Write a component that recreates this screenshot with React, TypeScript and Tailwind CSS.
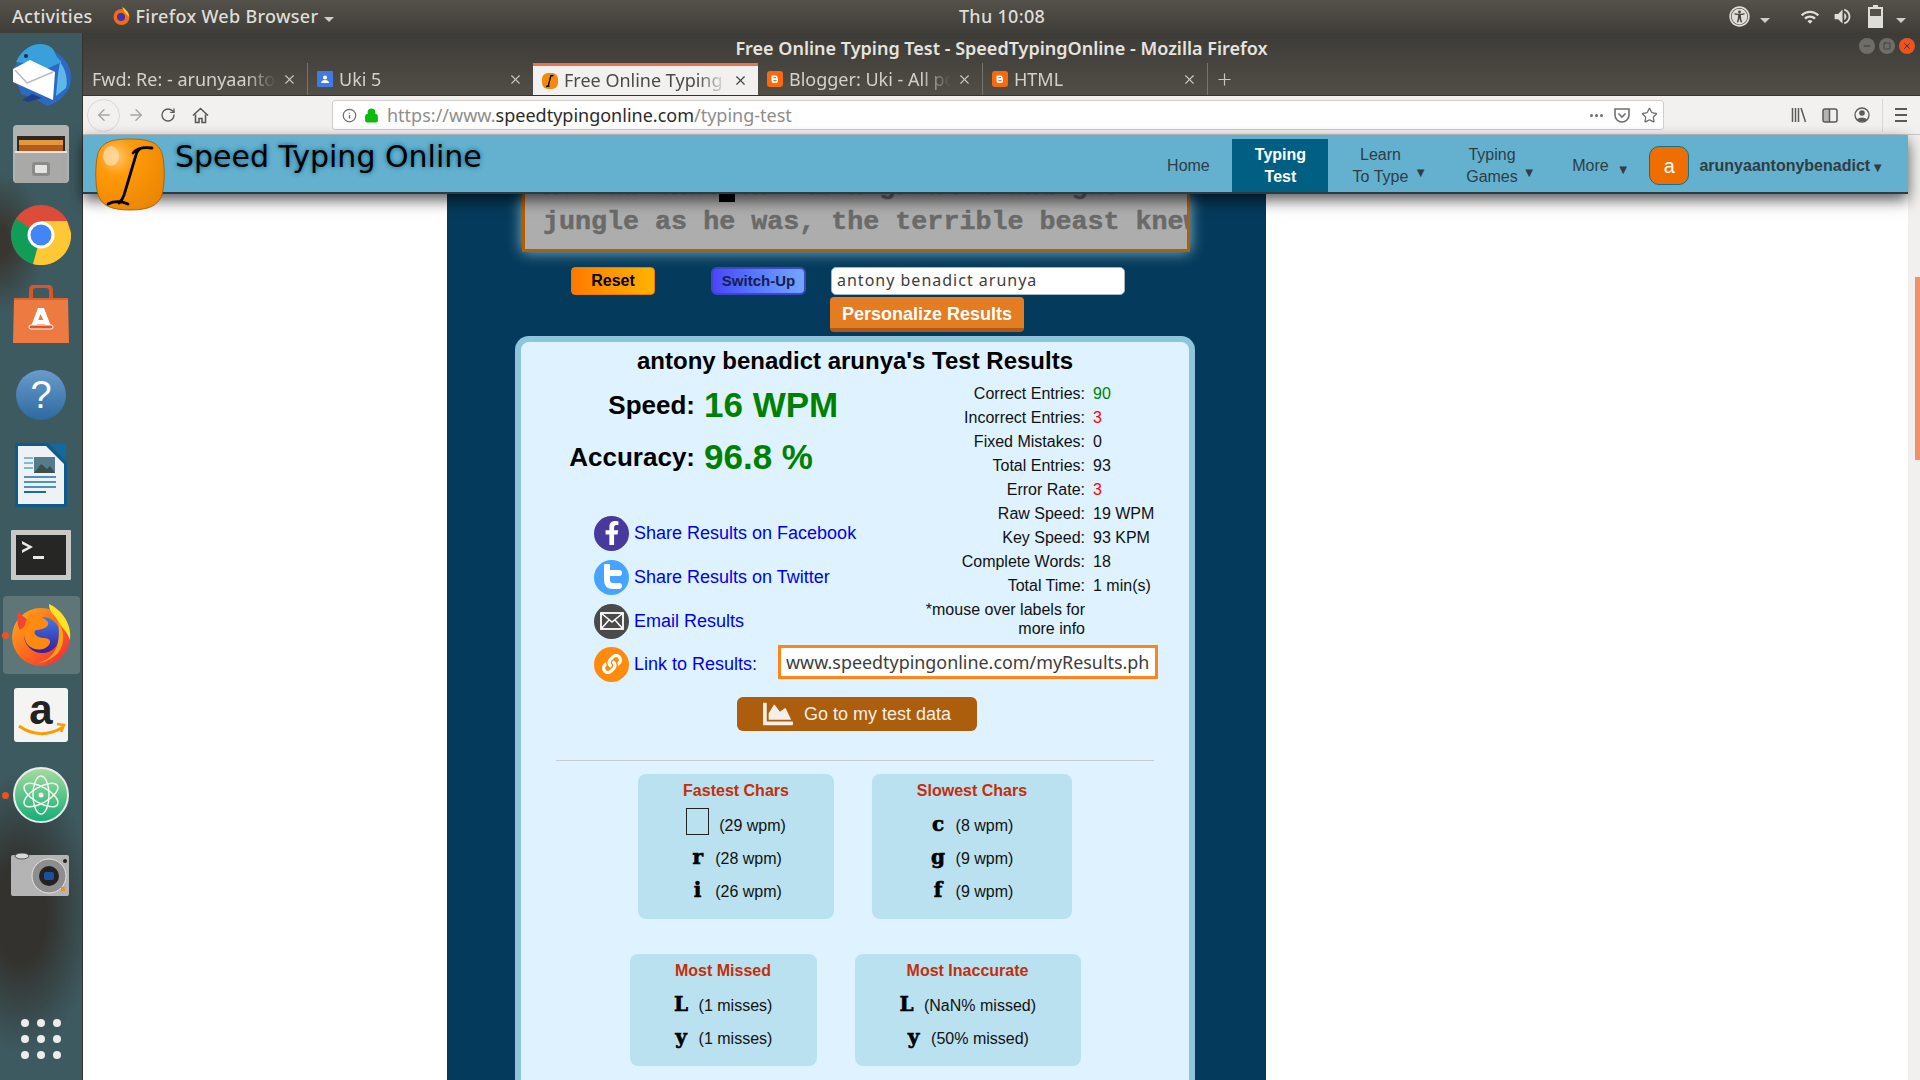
import React from "react";
import { ArrowLeft, ArrowRight, RotateCw, Info, Lock, Star, X, Plus, Minus, Square } from "lucide-react";
import { FaUniversalAccess, FaChartArea, FaFacebookF, FaLink } from "react-icons/fa";
import { MdWifi, MdVolumeUp } from "react-icons/md";

const ui = "font-['Noto_Sans',sans-serif]";
const arial = "font-['Liberation_Sans',Arial,sans-serif]";
const mono = "font-['Liberation_Mono','Courier_New',monospace]";

const TinyCaret = () => <span className="inline-block w-0 h-0 border-x-[5px] border-x-transparent border-t-[5px] border-t-[#cfcdc8]" />;

const BloggerIcon = () => (
  <svg width="16" height="16" viewBox="0 0 16 16" className="shrink-0">
    <rect width="16" height="16" rx="3" fill="#f96a0e" />
    <path d="M5 4.500h3.500a2 2 0 0 1 2 2v1h.5v2.500a2 2 0 0 1-2 2H6.500a2 2 0 0 1-2-2V5z" fill="#fff" />
    <rect x="6.500" y="6" width="2.500" height="1.200" fill="#f96a0e" />
    <rect x="6.500" y="9" width="3" height="1.200" fill="#f96a0e" />
  </svg>
);

const LogoFavicon = () => (
  <svg width="16" height="16" viewBox="0 0 16 16" className="shrink-0">
    <rect width="16" height="16" rx="6" fill="#f28a0c" />
    <path d="M10.500 2.500c-1 0-1.500.5-2 1.500L6.500 12c-.3 1-1 1.300-2 1.500M8 3l3.500-.5M4 13.500l3.500-.5" stroke="#000" strokeWidth="1.300" fill="none" />
  </svg>
);

const DocsIcon = () => (
  <svg width="16" height="16" viewBox="0 0 16 16" className="shrink-0">
    <rect width="16" height="16" rx="1" fill="#3f7be0" />
    <circle cx="8" cy="6.500" r="2" fill="#fff" />
    <path d="M4 12c0-2 2-3 4-3s4 1 4 3z" fill="#fff" />
  </svg>
);

type TabProps = { title: React.ReactNode; icon?: React.ReactNode; active?: boolean; sep?: boolean };

const Tab: React.FC<TabProps> = ({ title, icon, active, sep }) => (
  <div
    className={`relative w-[225px] h-full flex items-center gap-[6px] pl-[9px] pr-[10px] ${
      active ? "bg-[#f2f1ef] border-t-[3px] border-[#e9734a] text-[#4a4a47]" : "text-[#d3d1cb]"
    } ${sep ? "border-r border-[#77746c]" : ""}`}
  >
    {icon}
    <span className="flex-1 overflow-hidden whitespace-nowrap text-[18px] [mask-image:linear-gradient(to_left,transparent,black_30px)]">{title}</span>
    <X className={active ? "text-[#3f3f3c]" : "text-[#c9c7c1]"} size={15} strokeWidth={1.800} />
  </div>
);

const DockItem: React.FC<{ children: React.ReactNode; active?: boolean; dot?: boolean }> = ({ children, active, dot }) => (
  <div className="relative h-[80px] w-[83px] flex items-center justify-center">
    {active && <div className="absolute inset-x-[3px] inset-y-[1px] rounded-[4px] bg-[#5f7679]" />}
    {dot && <div className="absolute left-[2px] top-[37px] w-[7px] h-[7px] rounded-full bg-[#e95420]" />}
    <div className="relative">{children}</div>
  </div>
);

const Dock = () => (
  <div className="w-[83px] shrink-0 flex flex-col items-center pt-[2px] bg-[#3d5a60] bg-[radial-gradient(ellipse_75px_140px_at_25%_84%,#33322e_35%,transparent_100%),radial-gradient(ellipse_45px_70px_at_0%_20%,#38362f_20%,transparent_100%)] border-r border-[#33322e]">
    <DockItem>
      <svg width="66" height="66" viewBox="0 0 66 66">
        <path d="M30 8c12-4 30 6 33 24 2 16-10 28-24 32l-10-6-16-6L5 30C6 20 18 10 30 8z" fill="#2c68c4" />
        <path d="M8 20C16 2 34-2 44 6c4 4 2 8 10 14l-18 8-14-6z" fill="#3aa0dc" />
        <path d="M52 20c6 8 8 18 6 26l-10 8 2-22z" fill="#5cb8e8" />
        <path d="M5 27l17-9 25 12-2 28L5 40z" fill="#fff" />
        <path d="M7 28l12 13 26-11" fill="none" stroke="#b8bcc4" strokeWidth="1.500" />
        <path d="M14 58l10-6 10 4-14 4z" fill="#1e3f8a" />
        <circle cx="18" cy="14" r="2" fill="#15304f" />
      </svg>
    </DockItem>
    <DockItem>
      <svg width="58" height="60" viewBox="0 0 58 60">
        <rect x="1" y="0" width="56" height="58" rx="4" fill="#b2b2b0" />
        <rect x="5" y="11" width="48" height="20" fill="#2c2825" />
        <rect x="7" y="15" width="44" height="6" fill="#e59a3a" />
        <rect x="7" y="20" width="44" height="7" fill="#b75b1c" />
        <rect x="3" y="26" width="52" height="32" rx="1" fill="#a9a9a7" />
        <rect x="3" y="26" width="52" height="2" fill="#e5e5e3" />
        <rect x="20" y="37" width="18" height="14" rx="3" fill="#8b8b89" />
        <rect x="23" y="40" width="12" height="8" rx="1" fill="#e4e4e2" />
      </svg>
    </DockItem>
    <DockItem>
      <svg width="60" height="60" viewBox="0 0 60 60">
        <circle cx="30" cy="30" r="30" fill="#dd4b39" />
        <path d="M30 30L5 14A30 30 0 0 0 22 59z" fill="#0f9d58" />
        <path d="M30 30L22 59A30 30 0 0 0 60 28L56 16H30z" fill="#fcc934" />
        <circle cx="30" cy="30" r="13.500" fill="#fff" />
        <circle cx="30" cy="30" r="10.500" fill="#4285f4" />
      </svg>
    </DockItem>
    <DockItem>
      <svg width="58" height="60" viewBox="0 0 58 60">
        <path d="M19 14V6q0-5 5-5h10q5 0 5 5v8" fill="none" stroke="#d8572a" strokeWidth="4" />
        <path d="M2 13h54l1 45H1z" fill="#ed7a40" />
        <path d="M2 13h54v2H2z" fill="#d9642e" />
        <path d="M26 23h6l8 21h-5l-2-5H25l-2 5h-5z M28.500 29l-2.200 6h5z" fill="#fff" fillRule="evenodd" />
        <rect x="17" y="40" width="24" height="4" rx="2" fill="#e2552a" stroke="#fff" strokeWidth="1" />
      </svg>
    </DockItem>
    <DockItem>
      <svg width="52" height="52" viewBox="0 0 52 52">
        <defs>
          <linearGradient id="helpBg" x1="0" y1="0" x2="0" y2="1">
            <stop offset="0" stopColor="#6b9bcc" />
            <stop offset="1" stopColor="#2c6aa0" />
          </linearGradient>
        </defs>
        <circle cx="26" cy="26" r="25" fill="url(#helpBg)" />
        <text x="26" y="39" textAnchor="middle" fontSize="38" fontWeight="400" fill="#fff" fontFamily="Liberation Sans, sans-serif">?</text>
      </svg>
    </DockItem>
    <DockItem>
      <svg width="54" height="64" viewBox="0 0 54 64">
        <path d="M1 0h33l19 20v44H1z" fill="#0f5b8c" />
        <path d="M4 3h28l18 18v40H4z" fill="#eef2f4" />
        <path d="M37 1h15v17z" fill="#0f6aa4" />
        <rect x="20" y="14" width="21" height="16" fill="#567b8c" />
        <path d="M20 30l7-9 6 5 3-3 5 7z" fill="#3d4f4a" />
        <rect x="10" y="14" width="9" height="2" fill="#82b6d6" />
        <rect x="10" y="19" width="9" height="2" fill="#82b6d6" />
        <rect x="10" y="24" width="9" height="2" fill="#82b6d6" />
        <rect x="10" y="33" width="32" height="2" fill="#4c93c2" />
        <rect x="10" y="38" width="32" height="2" fill="#4c93c2" />
        <rect x="10" y="43" width="32" height="2" fill="#4c93c2" />
        <rect x="10" y="48" width="22" height="2" fill="#1d6a9c" />
      </svg>
    </DockItem>
    <DockItem>
      <svg width="60" height="50" viewBox="0 0 60 50">
        <rect x="0" y="0" width="60" height="50" rx="1" fill="#c8c8c6" />
        <rect x="5" y="5" width="50" height="40" fill="#262624" />
        <path d="M11 11l11 6-11 6v-3l6-3-6-3z" fill="#e8e8e6" />
        <rect x="22" y="26" width="11" height="3" fill="#e8e8e6" />
      </svg>
    </DockItem>
    <DockItem active dot>
      <svg width="62" height="62" viewBox="0 0 62 62">
        <defs>
          <linearGradient id="foxBg" x1="0" y1="0" x2="1" y2="1">
            <stop offset="0" stopColor="#ffb11f" />
            <stop offset="0.500" stopColor="#ff6a1a" />
            <stop offset="1" stopColor="#e6264a" />
          </linearGradient>
          <linearGradient id="foxCore" x1="0" y1="0" x2="0" y2="1">
            <stop offset="0" stopColor="#3f7be8" />
            <stop offset="1" stopColor="#3a1c9c" />
          </linearGradient>
        </defs>
        <circle cx="31" cy="33" r="29" fill="url(#foxBg)" />
        <path d="M8 8c-2 8 0 14 2 18l10-8z" fill="#f2462f" />
        <circle cx="32" cy="31" r="18" fill="url(#foxCore)" />
        <path d="M20 10c6 0 12 2 18 8 2 6-8 8-12 8-4 2 0 8 8 8 6 0 8 4 4 8-6 6-18 4-22-4-4-8-2-20 4-28z" fill="#ff8a12" />
        <path d="M39 0c13 6 23 20 21 36-3-9-8-12-12-19-3-6-9-8-9-17z" fill="#ffe226" />
        <path d="M48 17c6 8 8 22 0 32-6 6-14 10-20 10 14-4 24-14 20-42z" fill="#ff9f12" />
      </svg>
    </DockItem>
    <DockItem>
      <svg width="54" height="54" viewBox="0 0 54 54">
        <rect width="54" height="54" rx="3" fill="#f4f4f3" />
        <text x="27" y="36" textAnchor="middle" fontSize="42" fontWeight="700" fill="#222" fontFamily="Liberation Sans, sans-serif">a</text>
        <path d="M5 38c14 10 30 10 44 1" fill="none" stroke="#ff9a00" strokeWidth="3" />
        <path d="M43 36l7 1-3 7" fill="none" stroke="#ff9a00" strokeWidth="2.500" />
      </svg>
    </DockItem>
    <DockItem dot>
      <svg width="56" height="56" viewBox="0 0 56 56">
        <defs>
          <linearGradient id="atomBg" x1="0" y1="0" x2="0" y2="1">
            <stop offset="0" stopColor="#a7dc9e" />
            <stop offset="1" stopColor="#12ad78" />
          </linearGradient>
        </defs>
        <circle cx="28" cy="28" r="27" fill="url(#atomBg)" stroke="#ececec" strokeWidth="2" />
        <g fill="none" stroke="#eef8ee" strokeWidth="1.500">
          <ellipse cx="28" cy="28" rx="19" ry="8" transform="rotate(30 28 28)" />
          <ellipse cx="28" cy="28" rx="19" ry="8" transform="rotate(-30 28 28)" />
          <ellipse cx="28" cy="28" rx="19" ry="8" transform="rotate(90 28 28)" />
        </g>
        <circle cx="28" cy="28" r="2.500" fill="#eef8ee" />
      </svg>
    </DockItem>
    <DockItem>
      <svg width="60" height="44" viewBox="0 0 60 44">
        <rect x="0" y="2" width="58" height="41" rx="2" fill="#b4b4b4" />
        <ellipse cx="11" cy="3" rx="7" ry="3" fill="#d8d8d8" stroke="#555" />
        <circle cx="38" cy="23" r="17" fill="#8e8e8e" stroke="#e4e4e4" />
        <circle cx="38" cy="23" r="10" fill="#222" />
        <rect x="33" y="19" width="10" height="8" rx="2" fill="#1c4fa0" />
        <circle cx="54" cy="8" r="2" fill="#222" />
        <rect x="50" y="34" width="4" height="4" fill="#e3932c" />
      </svg>
    </DockItem>
    <div className="mt-auto mb-[21px] grid grid-cols-3 gap-x-[8px] gap-y-[8px]">
      {Array.from({ length: 9 }).map((_, i) => (
        <div key={i} className="w-[8px] h-[8px] rounded-full bg-[#ececec]" />
      ))}
    </div>
  </div>
);

const TopBar = () => (
  <div className={`${ui} relative h-[33px] shrink-0 flex items-center justify-between pl-[12px] pr-[14px] bg-gradient-to-b from-[#55524b] to-[#3f3d38] text-[#dfddd8] text-[18px] tracking-[0.3px] font-medium`}>
    <div className="flex items-center">
      <span>Activities</span>
      <svg width="17" height="19" viewBox="0 0 17 19" className="ml-[20px] mr-[6px]">
        <circle cx="8.500" cy="10" r="8" fill="#f26a1b" />
        <circle cx="8" cy="10" r="4" fill="#4631a8" />
        <path d="M9 0c4 2 7 6 7 10-2-3-4-3-5-6z" fill="#ffcb2b" />
      </svg>
      <span>Firefox Web Browser</span>
      <span className="ml-[6px] mb-[2px]"><TinyCaret /></span>
    </div>
    <span className="absolute left-[1002px] -translate-x-1/2 whitespace-nowrap">Thu 10:08</span>
    <div className="flex items-center text-[#dfddd8]">
      <FaUniversalAccess size={21} />
      <span className="ml-[10px] mr-[30px]"><TinyCaret /></span>
      <MdWifi size={20} className="mr-[12px]" />
      <MdVolumeUp size={21} className="mr-[15px]" />
      <svg width="15" height="23" viewBox="0 0 15 23">
        <path d="M5 0h5v2h5v21H0V2h5z" fill="#dfddd8" />
        <rect x="2" y="4" width="11" height="7" fill="#55524b" />
      </svg>
      <span className="ml-[13px]"><TinyCaret /></span>
    </div>
  </div>
);

const WindowTitle = () => (
  <div className={`${ui} relative h-[30px] flex items-center justify-center text-[18px] font-semibold text-[#e6e4df]`}>
    <span className="whitespace-nowrap">Free Online Typing Test - SpeedTypingOnline - Mozilla Firefox</span>
    <div className="absolute right-[5px] top-[5px] flex gap-[4px]">
      <span className="w-[16px] h-[16px] rounded-full bg-[#6f6d67] flex items-center justify-center text-[#2f2e2b]"><Minus size={10} /></span>
      <span className="w-[16px] h-[16px] rounded-full bg-[#6f6d67] flex items-center justify-center text-[#2f2e2b]"><Square size={8} /></span>
      <span className="w-[16px] h-[16px] rounded-full bg-[#e95420] flex items-center justify-center text-[#5a2010]"><X size={10} /></span>
    </div>
  </div>
);

const TabStrip = () => (
  <div className={`${ui} h-[32px] flex items-stretch`}>
    <Tab title="Fwd: Re: - arunyaantony" sep />
    <Tab title="Uki 5" icon={<DocsIcon />} />
    <Tab title="Free Online Typing Test" icon={<LogoFavicon />} active />
    <Tab title="Blogger: Uki - All posts" icon={<BloggerIcon />} sep />
    <Tab title="HTML" icon={<BloggerIcon />} sep />
    <div className="ml-[7px] flex items-center text-[#c9c7c1]"><Plus size={19} strokeWidth={1.500} /></div>
  </div>
);

const Toolbar = () => (
  <div className={`${ui} h-[40px] shrink-0 flex items-center bg-[#f2f1ef] border-b border-[#c9c8c5] border-t border-t-[#34332f] text-[#5a5a58]`}>
    <div className="ml-[4px] w-[33px] h-[33px] rounded-full border border-[#d8d7d4] flex items-center justify-center text-[#a7a7a4]"><ArrowLeft size={18} /></div>
    <ArrowRight size={18} className="ml-[7px] text-[#a7a7a4]" />
    <RotateCw size={16} className="ml-[15px]" strokeWidth={2} />
    <svg width="17" height="17" viewBox="0 0 17 17" className="ml-[16px]">
      <path d="M1 8.500L8.500 1.500l7.500 7M3.500 7.500V15.500h3.500v-4h3v4h3.500V7.500" fill="none" stroke="#5a5a58" strokeWidth="1.600" />
    </svg>
    <div className="ml-[123px] w-[1332px] h-[30px] flex items-center bg-white border border-[#cfcecb] rounded-[3px] text-[18px]">
      <Info size={15} className="ml-[9px] text-[#6b6b69]" />
      <Lock size={15} className="ml-[7px] text-[#0fb90f]" fill="#0fb90f" strokeWidth={2.500} />
      <span className="ml-[8px] whitespace-nowrap text-[#8e8e8c]">
        https://www.<span className="text-[#2b2b29]">speedtypingonline.com</span>/typing-test
      </span>
      <div className="ml-auto mr-[5px] flex items-center gap-[11px] text-[#6f6f6d]">
        <span className="flex gap-[2px]">
          <i className="w-[3px] h-[3px] rounded-full bg-[#6f6f6d]" />
          <i className="w-[3px] h-[3px] rounded-full bg-[#6f6f6d]" />
          <i className="w-[3px] h-[3px] rounded-full bg-[#6f6f6d]" />
        </span>
        <svg width="16" height="15" viewBox="0 0 16 15">
          <path d="M1 1h14v6a7 7 0 0 1-14 0z" fill="none" stroke="#6f6f6d" strokeWidth="1.600" />
          <path d="M4.500 5.500L8 9l3.500-3.500" fill="none" stroke="#6f6f6d" strokeWidth="1.600" />
        </svg>
        <Star size={17} strokeWidth={1.800} />
      </div>
    </div>
    <svg width="16" height="16" viewBox="0 0 16 16" className="ml-[127px]">
      <path d="M1.500 1v14M4.500 1v14M7.500 1v14M10 1l4.500 14" stroke="#5a5a58" strokeWidth="1.500" fill="none" />
    </svg>
    <svg width="16" height="15" viewBox="0 0 16 15" className="ml-[15px]">
      <rect x="1" y="1" width="14" height="13" rx="2" fill="none" stroke="#5a5a58" strokeWidth="1.500" />
      <rect x="1" y="1" width="6" height="13" fill="#5a5a58" opacity="0.400" />
      <path d="M7.500 1v13" stroke="#5a5a58" strokeWidth="1.500" />
    </svg>
    <svg width="16" height="16" viewBox="0 0 16 16" className="ml-[16px]">
      <circle cx="8" cy="8" r="7" fill="none" stroke="#5a5a58" strokeWidth="1.300" />
      <circle cx="8" cy="6" r="2.800" fill="#5a5a58" />
      <path d="M3 12.500c1-2.500 9-2.500 10 0-2 2.500-8 2.500-10 0z" fill="#5a5a58" />
    </svg>
    <div className="ml-[12px] w-px h-[33px] bg-[#d8d7d4]" />
    <div className="ml-[12px] flex flex-col gap-[4px]">
      <i className="block w-[12px] h-[2px] bg-[#5a5a58]" />
      <i className="block w-[12px] h-[2px] bg-[#5a5a58]" />
      <i className="block w-[12px] h-[2px] bg-[#5a5a58]" />
    </div>
  </div>
);

const Caret = () => <span className="text-[13px] leading-none text-[#2f3d44]">▼</span>;

const SiteNav = () => (
  <div className={`${arial} relative z-10 h-[59px] shrink-0 flex items-stretch bg-[#63b1cf] border-b-2 border-[#2d3b42] shadow-[0_6px_14px_rgba(0,0,0,0.65)] text-[16px] text-[#2f3d44]`}>
    <svg width="70" height="74" viewBox="0 0 70 74" className="absolute left-[12px] top-[3px]">
      <defs>
        <radialGradient id="logoBg" cx="0.300" cy="0.250" r="0.900">
          <stop offset="0" stopColor="#ffc56e" />
          <stop offset="0.300" stopColor="#ff9a0a" />
          <stop offset="1" stopColor="#e88400" />
        </radialGradient>
      </defs>
      <path d="M35 1c20 0 28 4 32 14 3 12 3 30 0 42-4 11-14 15-32 15S7 68 3 57C0 45 0 27 3 15 7 5 15 1 35 1z" fill="url(#logoBg)" stroke="#9a5a06" strokeWidth="0.800" />
      <ellipse cx="16" cy="18" rx="8" ry="10" fill="#ffe0b0" opacity="0.700" />
      <path d="M38 15c4-5 11-6 19-5M47 10c-3 1-5 3-6 7L29 57c-1 4-3 6-5 8M13 66c6-3 13-3 20 0" stroke="#000" strokeWidth="2.800" fill="none" strokeLinecap="round" />
    </svg>
    <span className="ml-[92px] mt-[3px] font-['DejaVu_Sans',sans-serif] text-[30px] leading-[38px] text-black [text-shadow:0_0_5px_#0f5c7e] whitespace-nowrap">Speed Typing Online</span>
    <nav className="ml-auto flex items-stretch pt-[4px]">
      <a className="w-[88px] flex items-center justify-center">Home</a>
      <a className="w-[96px] flex items-center justify-center text-center leading-[22px] font-bold text-white bg-[#005f83]">Typing<br />Test</a>
      <a className="w-[106px] flex items-center justify-center text-center leading-[22px] pl-[17px] pt-[1px]">
        <span>Learn<br />To Type</span>
        <span className="ml-[6px] mt-[12px]"><Caret /></span>
      </a>
      <a className="w-[118px] flex items-center justify-center text-center leading-[22px] pl-[15px] pt-[1px]">
        <span>Typing<br />Games</span>
        <span className="ml-[5px] mt-[12px]"><Caret /></span>
      </a>
      <a className="w-[88px] flex items-center justify-center pl-[9px]">
        <span>More</span>
        <span className="ml-[8px] mt-[7px]"><Caret /></span>
      </a>
      <div className="flex items-center pl-[9px] pr-[24px]">
        <div className="w-[40px] h-[39px] rounded-[10px] bg-[#f06e00] border border-[#14708f] flex items-center justify-center text-[20px] text-white">a</div>
        <span className="ml-[10px] font-bold whitespace-nowrap">arunyaantonybenadict</span>
        <span className="ml-[1px] mt-[2px]"><Caret /></span>
      </div>
    </nav>
  </div>
);

const TypingBox = () => (
  <div className="w-[668px] h-[58px] ml-[75px] overflow-hidden bg-[#adadad] border-x-[3px] border-b-[3px] border-[#b35f00] shadow-[0_0_14px_rgba(190,225,240,0.75)] pl-[18px]">
    <div className={`${mono} -mt-[23px] text-[26.7px] leading-[32px] font-bold text-[#6a6a6a] whitespace-pre [-webkit-text-stroke:0.5px_#6a6a6a]`}>
      <div>he saw that<span className="bg-black"> </span>the lion growled and gave</div>
      <div className="mt-[3px]">jungle as he was, the terrible beast knew</div>
    </div>
  </div>
);

const Controls = () => (
  <div className="mt-[15px] ml-[124px] flex items-start">
    <button className={`${arial} w-[84px] h-[28px] rounded-[4px] bg-gradient-to-r from-[#ff7a00] to-[#ffb300] border border-[#f07800] text-[16px] font-bold text-black`}>Reset</button>
    <button className={`${arial} ml-[56px] w-[95px] h-[28px] rounded-[6px] bg-gradient-to-r from-[#4a44ff] to-[#73a5ff] border-2 border-[#3f46c8] text-[15px] font-bold text-[#14204f]`}>Switch-Up</button>
    <div className="ml-[25px]">
      <div className={`${ui} w-[294px] h-[28px] pl-[5px] pb-[2px] flex items-center bg-white border border-[#a9b3ba] rounded-[5px] text-[16px] tracking-[1px] text-[#3d3d3d]`}>antony benadict arunya</div>
      <button className={`${arial} mt-[2px] -ml-px w-[194px] h-[35px] pt-[3px] rounded-[4px] bg-[#e47c22] border-b-[4px] border-[#ae5a14] text-[18px] font-bold text-white`}>Personalize Results</button>
    </div>
  </div>
);

const stats: { label: string; value: string; tone?: string }[] = [
  { label: "Correct Entries:", value: "90", tone: "text-[#008000]" },
  { label: "Incorrect Entries:", value: "3", tone: "text-[#ff0000]" },
  { label: "Fixed Mistakes:", value: "0" },
  { label: "Total Entries:", value: "93" },
  { label: "Error Rate:", value: "3", tone: "text-[#ff0000]" },
  { label: "Raw Speed:", value: "19 WPM" },
  { label: "Key Speed:", value: "93 KPM" },
  { label: "Complete Words:", value: "18" },
  { label: "Total Time:", value: "1 min(s)" },
];

const StatsTable = () => (
  <div className="ml-auto mr-[28px] pt-[1px] w-[235px] text-[16px] text-[#111]">
    {stats.map((row) => (
      <div key={row.label} className="flex h-[24px] items-center whitespace-nowrap">
        <span className="w-[159px] text-right">{row.label}</span>
        <span className={`ml-[8px] ${row.tone || ""}`}>{row.value}</span>
      </div>
    ))}
    <div className="-ml-[3px] w-[162px] text-right leading-[19px] mt-[2px]">*mouse over labels for more info</div>
  </div>
);

const ShareCircle: React.FC<{ bg: string; children: React.ReactNode }> = ({ bg, children }) => (
  <span className={`w-[35px] h-[35px] rounded-full shrink-0 flex items-center justify-center text-white ${bg}`}>{children}</span>
);

const ShareRow: React.FC<{ icon: React.ReactNode; label: string }> = ({ icon, label }) => (
  <div className="h-[44px] flex items-center gap-[5px] text-[18px] text-[#0000ee]">
    {icon}
    <span>{label}</span>
  </div>
);

const TwitterT = () => (
  <svg width="22" height="26" viewBox="0 0 22 26">
    <path d="M6 2v14c0 4 2 6 6 6h6M6 9h12" fill="none" stroke="#fff" strokeWidth="6" strokeLinecap="round" />
  </svg>
);

const MailGlyph = () => (
  <svg width="24" height="18" viewBox="0 0 24 18">
    <rect x="1" y="1" width="22" height="16" fill="none" stroke="#fff" strokeWidth="1.800" />
    <path d="M1 1l11 9 11-9M1 17l8-9M23 17l-8-9" fill="none" stroke="#fff" strokeWidth="1.500" />
  </svg>
);

const CharRow: React.FC<{ ch: string; text: string; boxed?: boolean }> = ({ ch, text, boxed }) => (
  <div className="h-[33px] flex items-center justify-center gap-[10px] whitespace-nowrap">
    {boxed ? (
      <span className="w-[23px] h-[27px] border border-[#222] -mt-[8px]" />
    ) : (
      <span className="font-['DejaVu_Serif',serif] w-[15px] text-center text-[20px] leading-none font-bold -mt-[3px] text-black [-webkit-text-stroke:0.6px_#000]">{ch}</span>
    )}
    <span>{text}</span>
  </div>
);

const CharBox: React.FC<{ title: string; width: string; height: string; head: string; children: React.ReactNode }> = ({ title, width, height, head, children }) => (
  <div className={`${width} ${height} rounded-[8px] bg-[#b9e1f0] text-[16px] text-[#111] text-center`}>
    <div className={`${head} font-bold text-[#c52e0a]`}>{title}</div>
    {children}
  </div>
);

const ResultsPanel = () => (
  <div className={`${arial} mt-[4px] ml-[68px] w-[680px] border-[6px] border-b-0 border-[#8ec5db] rounded-t-[14px] bg-[#def3ff] h-[760px]`}>
    <h2 className="pt-[4px] text-center text-[24px] leading-[30px] font-bold text-black">antony benadict arunya's Test Results</h2>
    <div className="flex mt-[5px]">
      <div className="pl-[73px]">
        <div className="-ml-[73px] pt-[3px] w-[400px] grid grid-cols-[174px_auto] gap-x-[9px] gap-y-[10px] items-center">
          <span className="text-right text-[26px] font-bold text-black leading-[42px]">Speed:</span>
          <span className="text-[35px] font-bold text-[#008000] leading-[42px]">16 WPM</span>
          <span className="text-right text-[26px] font-bold text-black leading-[42px]">Accuracy:</span>
          <span className="text-[35px] font-bold text-[#008000] leading-[42px]">96.8 %</span>
        </div>
        <div className="mt-[33px]">
          <ShareRow icon={<ShareCircle bg="bg-[#48399d]"><FaFacebookF size={24} /></ShareCircle>} label="Share Results on Facebook" />
          <ShareRow icon={<ShareCircle bg="bg-[#46a4ff]"><TwitterT /></ShareCircle>} label="Share Results on Twitter" />
          <ShareRow icon={<ShareCircle bg="bg-[#4a4a4a]"><MailGlyph /></ShareCircle>} label="Email Results" />
        </div>
      </div>
      <StatsTable />
    </div>
    <div className="flex items-center pl-[73px] -mt-[1px] h-[44px]">
      <ShareCircle bg="bg-[#ff8a0c]"><FaLink size={20} /></ShareCircle>
      <span className="ml-[5px] pt-[1px] text-[18px] text-[#0000ee] whitespace-nowrap">Link to Results:</span>
      <div className={`${ui} ml-[21px] -mt-[4px] w-[380px] h-[34px] pl-[5px] flex items-center overflow-hidden whitespace-nowrap bg-white border-[3px] border-[#ff8419] text-[17.9px] text-[#3d3d3d]`}>www.speedtypingonline.com/myResults.ph</div>
    </div>
    <button className="block mt-[11px] ml-[216px] w-[240px] h-[34px] rounded-[6px] bg-[#ac5e0c] text-[18px] text-[#f4efe8]">
      <span className="flex items-center justify-center gap-[11px]">
        <FaChartArea size={30} />
        Go to my test data
      </span>
    </button>
    <div className="mt-[29px] ml-[35px] w-[598px] h-[1px] bg-[#c9c9d0]" />
    <div className="mt-[13px] flex justify-center gap-[38px]">
      <CharBox title="Fastest Chars" width="w-[196px]" height="h-[145px]" head="pt-[8px] pb-[2px] leading-[18px]">
        <div className="h-[7px]" />
        <CharRow ch="" text="(29 wpm)" boxed />
        <CharRow ch="r" text="(28 wpm)" />
        <CharRow ch="i" text="(26 wpm)" />
      </CharBox>
      <CharBox title="Slowest Chars" width="w-[200px]" height="h-[145px]" head="pt-[8px] pb-[2px] leading-[18px]">
        <div className="h-[7px]" />
        <CharRow ch="c" text="(8 wpm)" />
        <CharRow ch="g" text="(9 wpm)" />
        <CharRow ch="f" text="(9 wpm)" />
      </CharBox>
    </div>
    <div className="mt-[35px] flex justify-center gap-[38px]">
      <CharBox title="Most Missed" width="w-[187px]" height="h-[112px]" head="pt-[8px] pb-[2px] leading-[18px]">
        <div className="h-[7px]" />
        <CharRow ch="L" text="(1 misses)" />
        <CharRow ch="y" text="(1 misses)" />
      </CharBox>
      <CharBox title="Most Inaccurate" width="w-[226px]" height="h-[112px]" head="pt-[8px] pb-[2px] leading-[18px]">
        <div className="h-[7px]" />
        <CharRow ch="L" text="(NaN% missed)" />
        <CharRow ch="y" text="(50% missed)" />
      </CharBox>
    </div>
  </div>
);

const Page = () => (
  <div className="flex-1 flex min-h-0">
    <div className="flex-1 min-w-0 flex flex-col">
      <SiteNav />
      <div className="flex-1 min-h-0 overflow-hidden bg-white pl-[364px]">
        <div className="w-[819px] h-full bg-[#043a5b] overflow-hidden">
          <TypingBox />
          <Controls />
          <ResultsPanel />
        </div>
      </div>
    </div>
    <div className="w-[12px] shrink-0 bg-[#f1f0ee] pt-[142px] pl-[7px]">
      <div className="w-[5px] h-[183px] bg-[#f2906a]" />
    </div>
  </div>
);

export default function App() {
  return (
    <div className="w-[1920px] h-[1080px] overflow-hidden flex flex-col bg-[#3d3b37]">
      <TopBar />
      <div className="flex-1 min-h-0 flex">
        <Dock />
        <div className="flex-1 min-w-0 flex flex-col">
          <div className="h-[62px] shrink-0 bg-gradient-to-b from-[#3d3b37] to-[#514e47]">
            <WindowTitle />
            <TabStrip />
          </div>
          <Toolbar />
          <Page />
        </div>
      </div>
    </div>
  );
}
